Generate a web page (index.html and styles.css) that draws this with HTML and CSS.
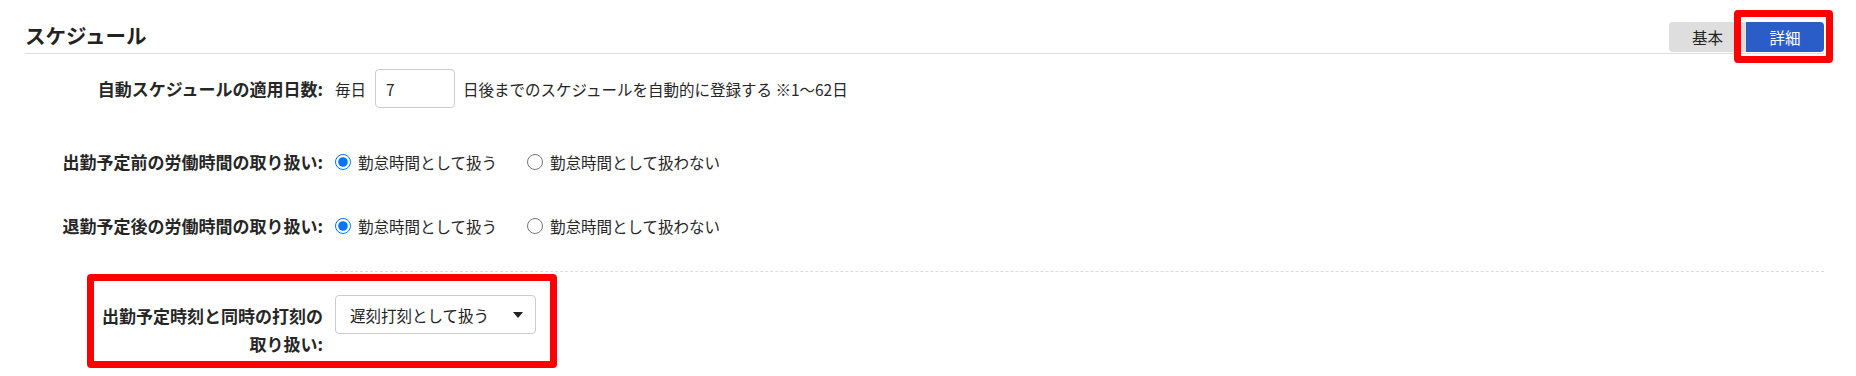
FILE: index.html
```html
<!DOCTYPE html>
<html lang="ja">
<head>
<meta charset="utf-8">
<title>スケジュール</title>
<link rel="stylesheet" href="styles.css">
</head>
<body>
<div class="page">
  <header class="head">
    <h1 class="title">スケジュール</h1>
    <div class="tabs">
      <button class="tab">基本</button>
      <button class="tab active">詳細</button>
    </div>
  </header>

  <div class="form">
    <div class="row row-first">
      <div class="label">自動スケジュールの適用日数:</div>
      <div class="value">
        <span class="pre">毎日</span>
        <input class="num" type="text" value="7">
        <span>日後までのスケジュールを自動的に登録する ※1〜62日</span>
      </div>
    </div>

    <div class="row">
      <div class="label">出勤予定前の労働時間の取り扱い:</div>
      <div class="value">
        <label class="radio"><input type="radio" name="before" checked><span>勤怠時間として扱う</span></label>
        <label class="radio"><input type="radio" name="before"><span>勤怠時間として扱わない</span></label>
      </div>
    </div>

    <div class="row row-last">
      <div class="label">退勤予定後の労働時間の取り扱い:</div>
      <div class="value">
        <label class="radio"><input type="radio" name="after" checked><span>勤怠時間として扱う</span></label>
        <label class="radio"><input type="radio" name="after"><span>勤怠時間として扱わない</span></label>
      </div>
    </div>

    <div class="row sep-row">
      <div></div>
      <div class="sep"></div>
    </div>

    <div class="row row-top">
      <div class="label label-wrap">出勤予定時刻と同時の打刻の<br>取り扱い:</div>
      <div class="value">
        <div class="select">
          <span>遅刻打刻として扱う</span>
          <svg class="caret" width="10" height="6" viewBox="0 0 10 6"><path d="M0 0H10L5 6Z" fill="#222"/></svg>
        </div>
      </div>
    </div>
  </div>
</div>

<div class="mark mark-tab"></div>
<div class="mark mark-row"></div>
</body>
</html>
```

FILE: styles.css
```css
* {
  box-sizing: border-box;
}

html, body {
  margin: 0;
  padding: 0;
  background: #fff;
}

body {
  font-family: "Noto Sans CJK JP", "Noto Sans", sans-serif;
  color: #262626;
  font-size: 15.5px;
  position: relative;
}

.page {
  margin-left: 25px;
  width: 1799px;
  padding-top: 23px;
}

.head {
  display: flex;
  justify-content: space-between;
  align-items: flex-end;
  height: 31px;
  padding-bottom: 1px;
  border-bottom: 1px solid #dcdcdc;
}

.title {
  margin: 0 0 4px 0;
  font-size: 20.5px;
  line-height: 26px;
  font-weight: 700;
  color: #222;
}

.tabs {
  display: flex;
}

.tab {
  height: 30px;
  border: none;
  margin: 0;
  padding: 0;
  font-family: inherit;
  font-size: 15.5px;
  line-height: 30px;
  background: #dedede;
  color: #222;
}

.tab:first-child {
  width: 77px;
  border-radius: 4px 0 0 4px;
}

.tab:last-child {
  width: 78px;
  border-radius: 0 4px 4px 0;
}

.tab.active {
  background: #2b5dc9;
  color: #fff;
}

.form {
  padding-top: 15px;
}

.row {
  display: grid;
  grid-template-columns: 298px 1fr;
  column-gap: 12px;
  align-items: center;
  min-height: 39px;
  margin-bottom: 25px;
}

.row-first {
  margin-bottom: 34px;
}

.row-last {
  margin-bottom: 26px;
}

.label {
  text-align: right;
  font-weight: 700;
  font-size: 17px;
  line-height: 28px;
  color: #262626;
}

.value {
  display: flex;
  align-items: center;
  line-height: 24px;
}

.pre {
  margin-right: 9px;
}

.num {
  width: 80px;
  height: 39px;
  border: 1px solid #cccccc;
  border-radius: 4px;
  padding: 0 10px;
  margin: 0 8px 0 0;
  font-family: inherit;
  font-size: 15.5px;
  color: #222;
}

.radio {
  display: inline-flex;
  align-items: center;
  gap: 7px;
}

.radio + .radio {
  margin-left: 30px;
}

.radio input {
  width: 16px;
  height: 16px;
  margin: 0;
}

.sep-row {
  min-height: 1px;
  margin-bottom: 23px;
}

.sep {
  border-top: 1px dashed #dddddd;
  height: 1px;
}

.row-top {
  align-items: start;
}

.label-wrap {
  padding-top: 7px;
}

.select {
  width: 201px;
  height: 39px;
  border: 1px solid #cccccc;
  border-radius: 4px;
  padding: 0 12px 0 14px;
  display: flex;
  align-items: center;
  justify-content: space-between;
  color: #222;
}

.caret {
  display: block;
}

.mark {
  position: absolute;
  border: 7px solid #ff0000;
  border-radius: 4px;
}

.mark-tab {
  left: 1734px;
  top: 10px;
  width: 99px;
  height: 53px;
}

.mark-row {
  left: 87px;
  top: 274px;
  width: 470px;
  height: 94px;
}
```
